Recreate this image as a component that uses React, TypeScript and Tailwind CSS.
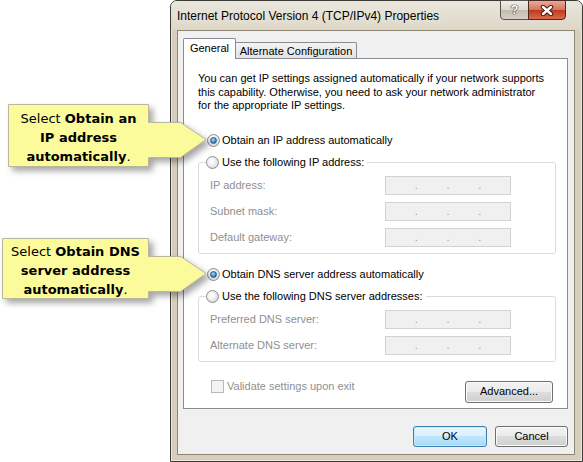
import React from "react";

const Radio = ({ checked }: { checked?: boolean }) => (
  <span className="flex w-[13px] h-[13px] shrink-0 items-center justify-center rounded-full border border-[#8f8f8f] bg-[radial-gradient(circle_at_40%_40%,#ffffff_0%,#f2f2f2_40%,#c4c4c4_100%)]">
    {checked && (
      <span className="block w-[7px] h-[7px] rounded-full border border-[#2b5f8a] bg-[radial-gradient(circle_at_40%_35%,#b4e4fb_0%,#3d8fca_55%,#0f4c80_100%)]" />
    )}
  </span>
);

const IpBox = () => (
  <div className="flex w-[126px] h-[19px] border border-[#d2d2d2] bg-[#f0f0f0] text-[#9a9a9a] leading-[17px]">
    <span className="flex-1" />
    <span>.</span>
    <span className="flex-1" />
    <span>.</span>
    <span className="flex-1" />
    <span>.</span>
    <span className="flex-1" />
  </div>
);

const FieldRow = ({ label }: { label: string }) => (
  <div className="flex h-[19px] items-center justify-between">
    <span className="text-[#8f8f8f]">{label}</span>
    <IpBox />
  </div>
);

const Group = ({ title, labels }: { title: string; labels: string[] }) => (
  <fieldset className="m-0 w-[358px] min-w-0 rounded-[3px] border border-[#d5dde2] pl-[11px] pr-[44px] pb-[6px]">
    <legend className="-ml-[4px] flex h-[13px] items-center gap-[3px] bg-white pr-[3px] leading-[13px]">
      <Radio />
      <span>{title}</span>
    </legend>
    <div className="flex flex-col gap-[7px] pt-[7px]">
      {labels.map((l) => (
        <FieldRow key={l} label={l} />
      ))}
    </div>
  </fieldset>
);

const Button = ({ label, w, primary }: { label: string; w: string; primary?: boolean }) => (
  <div
    className={
      "flex items-center justify-center rounded-[3px] border text-black " +
      w +
      (primary
        ? " border-[#3c7fb1] bg-[linear-gradient(#eaf6fd_0%,#d9f0fc_49%,#bee6fd_50%,#a7d9f5_100%)] shadow-[inset_0_0_0_1px_#c6e9fc]"
        : " border-[#707070] bg-[linear-gradient(#f2f2f2_0%,#ebebeb_49%,#dddddd_50%,#cfcfcf_100%)] shadow-[inset_0_0_0_1px_#fbfbfb]")
    }
  >
    {label}
  </div>
);

export default function App() {
  return (
    <div className="relative h-[462px] w-[583px] overflow-hidden bg-white font-['Liberation_Sans',Arial,sans-serif] text-[11px] text-black">
      {/* Window */}
      <div className="ml-[170px] flex h-[462px] w-[413px] flex-col rounded-t-[7px] border border-[#3b3a36] bg-[#d7cfbb] shadow-[inset_0_0_0_1px_#ece8dc]">
        {/* Title bar */}
        <div className="flex h-[29px] items-start bg-[linear-gradient(#e9e6dd,#ddd7c7)] rounded-t-[6px]">
          <div className="pl-[6px] pt-[8px] text-[12px] leading-[14px] text-black [text-shadow:0_0_8px_#f4f1e8]">
            Internet Protocol Version 4 (TCP/IPv4) Properties
          </div>
          <div className="ml-auto mr-[16px] -mt-[1px] flex">
            <div className="flex h-[20px] w-[29px] items-center justify-center rounded-bl-[4px] border border-[#57544c] bg-[linear-gradient(#f0eee9_0%,#dcd8ce_50%,#c3bdaf_51%,#d6d1c5_100%)] text-[13px] font-bold text-white [text-shadow:0_0_1px_#333,0_0_1px_#333,0_0_1px_#333]">
              ?
            </div>
            <div className="-ml-[1px] flex h-[20px] w-[38px] items-center justify-center rounded-br-[4px] border border-[#4a2a22] bg-[linear-gradient(#e9a99b_0%,#d7765f_48%,#c2391d_52%,#d86a4f_100%)]">
              <svg width="14" height="11" viewBox="0 0 14 11">
                <path d="M3 2 L11 9 M11 2 L3 9" stroke="#4a1d12" strokeWidth="4.5" strokeLinecap="round" />
                <path d="M3 2 L11 9 M11 2 L3 9" stroke="#ffffff" strokeWidth="2.4" strokeLinecap="round" />
              </svg>
            </div>
          </div>
        </div>

        {/* Client area */}
        <div className="ml-[6px] mr-[7px] mb-[6px] flex flex-1 flex-col border border-[#8c8574] bg-[#f0f0f0] pl-[5px] pr-[6px] pt-[7px]">
          {/* Tabs */}
          <div className="flex items-end">
            <div className="relative z-10 -mb-[1px] flex h-[21px] w-[53px] items-start justify-center rounded-t-[2px] border border-b-0 border-[#898c95] bg-white pt-[2px] leading-[14px]">
              General
            </div>
            <div className="-ml-[1px] flex h-[16px] w-[122px] items-center justify-center rounded-t-[2px] border border-b-0 border-[#898c95] bg-[linear-gradient(#f3f3f3,#e3e3e3)] leading-[14px]">
              Alternate Configuration
            </div>
          </div>

          {/* Panel */}
          <div className="flex h-[351px] w-[385px] flex-col border border-[#898c95] bg-white pl-[14px] pr-[11px] pt-[13px]">
            <p className="leading-[13.5px]">
              You can get IP settings assigned automatically if your network supports
              <br />
              this capability. Otherwise, you need to ask your network administrator
              <br />
              for the appropriate IP settings.
            </p>

            <div className="ml-[9px] mt-[21px] flex h-[13px] items-center gap-[2px] leading-[13px]">
              <Radio checked />
              <span>Obtain an IP address automatically</span>
            </div>

            <div className="mt-[9px]">
              <Group title="Use the following IP address:" labels={["IP address:", "Subnet mask:", "Default gateway:"]} />
            </div>

            <div className="ml-[9px] mt-[14px] flex h-[13px] items-center gap-[2px] leading-[13px]">
              <Radio checked />
              <span>Obtain DNS server address automatically</span>
            </div>

            <div className="mt-[9px]">
              <Group title="Use the following DNS server addresses:" labels={["Preferred DNS server:", "Alternate DNS server:"]} />
            </div>

            <div className="mt-[18px] flex items-start justify-between">
              <div className="ml-[13px] flex items-center gap-[3px] text-[#8f8f8f]">
                <span className="block h-[13px] w-[13px] border border-[#b9b9b9] bg-[#f4f4f4]" />
                <span className="leading-[13px]">Validate settings upon exit</span>
              </div>
              <div className="mr-[3px] mt-[1px]">
                <Button label="Advanced..." w="w-[88px] h-[22px]" />
              </div>
            </div>
          </div>

          {/* Bottom buttons */}
          <div className="mt-[17px] flex justify-end gap-[8px]">
            <Button label="OK" w="w-[74px] h-[21px]" primary />
            <Button label="Cancel" w="w-[73px] h-[21px]" />
          </div>
        </div>
      </div>

      {/* Callouts */}
      <svg
        className="absolute left-0 top-0 drop-shadow-[4px_4px_3px_rgba(0,0,0,0.35)]"
        width="215"
        height="320"
        viewBox="0 0 215 320"
      >
        <polygon
          points="8.5,104.5 148.5,104.5 148.5,122.5 180.5,122.5 206,139.5 180.5,157.5 148.5,157.5 148.5,166.5 8.5,166.5"
          fill="#fbfb9b"
          stroke="#b8b89c"
        />
        <polygon
          points="2.5,238.5 148.5,238.5 148.5,256.5 180.5,256.5 206,273.5 180.5,291.5 148.5,291.5 148.5,298.5 2.5,298.5"
          fill="#fbfb9b"
          stroke="#b8b89c"
        />
      </svg>
      <div className="absolute left-[8px] top-[104px] w-[141px] pt-[5px] text-center font-['DejaVu_Sans',Verdana,sans-serif] text-[13px] leading-[19px] text-black">
        Select <b>Obtain an</b>
        <br />
        <b>IP address</b>
        <br />
        <b>automatically</b>.
      </div>
      <div className="absolute left-[2px] top-[238px] w-[147px] pt-[4px] text-center font-['DejaVu_Sans',Verdana,sans-serif] text-[13px] leading-[19px] text-black">
        Select <b>Obtain DNS</b>
        <br />
        <b>server address</b>
        <br />
        <b>automatically</b>.
      </div>
    </div>
  );
}
